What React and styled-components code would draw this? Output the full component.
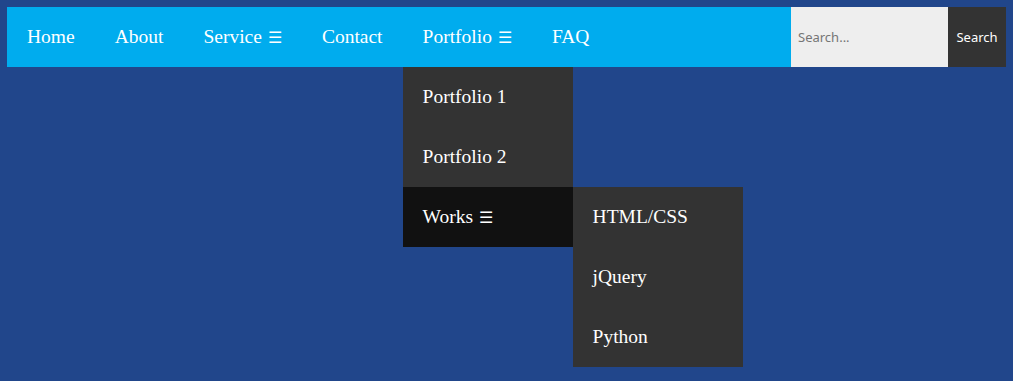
import styled, { createGlobalStyle } from "styled-components";

const GlobalStyle = createGlobalStyle`
    html, body {
        margin: 0;
        padding: 0;
        background: #21468b;
        min-height: 100%;
    }
    body {
        padding: 7px;
        height: 381px;
        box-sizing: border-box;
    }
`;

const NavBar = styled.nav`
    display: flex;
    align-items: stretch;
    height: 60px;
    background-color: #00acee;
    font-family: "Liberation Serif", "DejaVu Serif", serif;
`;

const Menu = styled.ul`
    display: flex;
    list-style: none;
    margin: 0;
    padding: 0;
`;

const Item = styled.li`
    position: relative;
    display: flex;
    align-items: center;
    height: 60px;
    padding: 0 20px;
    color: #fff;
    font-size: 19.5px;
    white-space: nowrap;
    cursor: pointer;
    background-color: ${({ $bg }) => $bg || "transparent"};
`;

const Dropdown = styled.ul`
    position: absolute;
    top: ${({ $side }) => ($side ? "0" : "60px")};
    left: ${({ $side }) => ($side ? "170px" : "0")};
    width: 170px;
    list-style: none;
    margin: 0;
    padding: 0;
    background-color: #333;
    z-index: 2;
`;

const Burger = styled.span`
    margin-left: 6px;
    font-size: 16px;
`;

const SearchForm = styled.form`
    display: flex;
    margin-left: auto;
    height: 60px;
`;

const SearchInput = styled.input`
    width: 157px;
    box-sizing: border-box;
    border: none;
    outline: none;
    padding: 0 7px;
    background-color: #eee;
    font-family: "Noto Sans", "DejaVu Sans", sans-serif;
    font-size: 13px;
    color: #333;

    &::placeholder {
        color: #757575;
    }
`;

const SearchButton = styled.button`
    width: 58px;
    border: none;
    background-color: #333;
    color: #fff;
    font-family: "Noto Sans", "DejaVu Sans", sans-serif;
    font-size: 13px;
    padding: 0;
    cursor: pointer;
`;

export default function App() {
    return (
        <>
            <GlobalStyle />
            <NavBar>
                <Menu>
                    <Item>Home</Item>
                    <Item>About</Item>
                    <Item>Service<Burger>☰</Burger></Item>
                    <Item>Contact</Item>
                    <Item>
                        Portfolio<Burger>☰</Burger>
                        <Dropdown>
                            <Item>Portfolio 1</Item>
                            <Item>Portfolio 2</Item>
                            <Item $bg="#111">
                                Works<Burger>☰</Burger>
                                <Dropdown $side>
                                    <Item>HTML/CSS</Item>
                                    <Item>jQuery</Item>
                                    <Item>Python</Item>
                                </Dropdown>
                            </Item>
                        </Dropdown>
                    </Item>
                    <Item>FAQ</Item>
                </Menu>
                <SearchForm onSubmit={(e) => e.preventDefault()}>
                    <SearchInput type="text" placeholder="Search..." />
                    <SearchButton type="submit">Search</SearchButton>
                </SearchForm>
            </NavBar>
        </>
    );
}
